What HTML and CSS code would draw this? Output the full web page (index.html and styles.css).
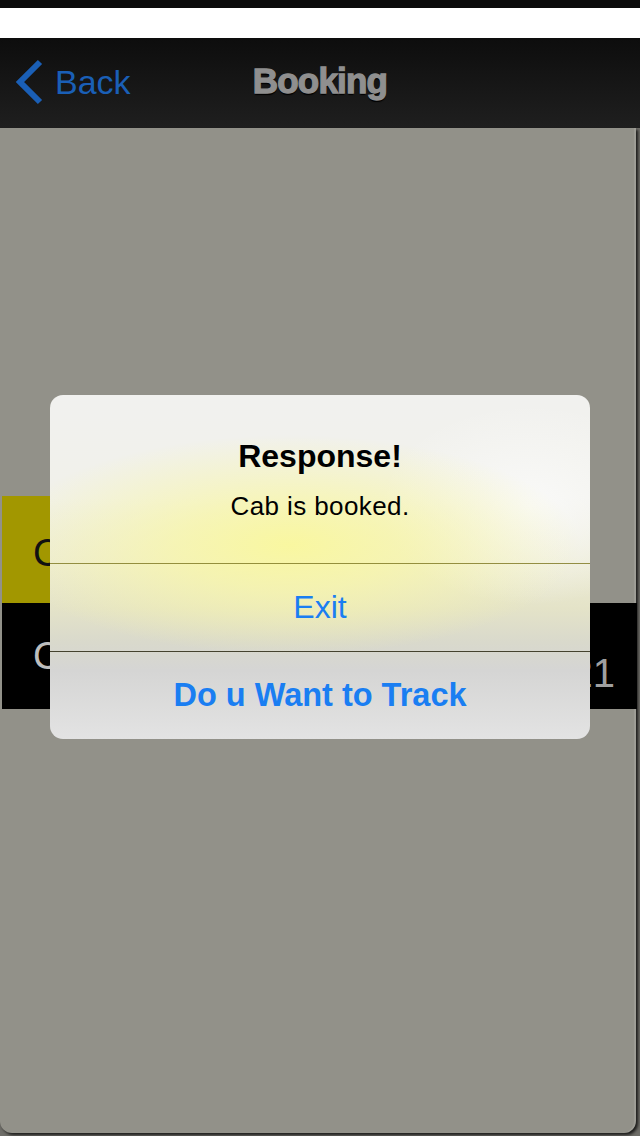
FILE: index.html
```html
<!DOCTYPE html>
<html>
<head>
<meta charset="utf-8">
<link rel="stylesheet" href="styles.css">
</head>
<body>
<div class="screen">
  <div class="statusbar"></div>
  <div class="gap"></div>
  <div class="nav">
    <div class="back">
      <svg class="chev" width="32" height="48" viewBox="0 0 32 48"><path d="M26 4 L6 24 L26 44" fill="none" stroke="#1a5fb6" stroke-width="6" stroke-linecap="butt" stroke-linejoin="miter"/></svg>
      <span class="back-text">Back</span>
    </div>
    <div class="title">Booking</div>
    <div class="spacer"></div>
  </div>
  <div class="stage">
    <div class="panel">
      <div class="row row-yellow"><span class="lbl">C</span></div>
      <div class="row row-black"><span class="lbl">C</span><span class="val">21</span></div>
    </div>
    <div class="alert">
      <div class="alert-body">
        <div class="alert-title">Response!</div>
        <div class="alert-msg">Cab is booked.</div>
      </div>
      <div class="alert-btn btn-exit">Exit</div>
      <div class="alert-btn btn-track">Do u Want to Track</div>
    </div>
  </div>
</div>
</body>
</html>
```
FILE: styles.css
```css
html, body {
  margin: 0;
  padding: 0;
}
body {
  width: 640px;
  height: 1136px;
  overflow: hidden;
  background: #ffffff;
  font-family: "Liberation Sans", Arial, sans-serif;
}
.screen {
  width: 640px;
  height: 1136px;
  display: flex;
  flex-direction: column;
}
.statusbar {
  height: 8px;
  background: #0b0b0b;
}
.gap {
  height: 30px;
  background: #ffffff;
}
.nav {
  height: 90px;
  background: linear-gradient(to bottom, #0d0d0d 0%, #161616 50%, #1f1f1f 100%);
  display: grid;
  grid-template-columns: 1fr auto 1fr;
  align-items: center;
}
.back {
  display: flex;
  align-items: center;
  padding-left: 14px;
  gap: 9px;
  margin-top: -2px;
}
.chev {
  display: block;
}
.back-text {
  color: #1a5fb6;
  font-size: 34px;
  line-height: 40px;
}
.title {
  color: #8f8f8f;
  font-size: 35px;
  font-weight: 700;
  line-height: 40px;
  letter-spacing: -0.8px;
  -webkit-text-stroke: 1.3px #8f8f8f;
  text-shadow: 0 2px 1px #000, 0 1px 0 #000;
  margin-top: -4px;
}
.stage {
  flex: 1;
  position: relative;
  background: #6e6d68;
}
.panel {
  width: 636px;
  height: 1005px;
  background: #929189;
  border-radius: 0 0 12px 12px;
  box-shadow: 2px 2px 3px rgba(0, 0, 0, 0.75), inset -2px 0 1px rgba(255, 255, 255, 0.12);
  padding-top: 368px;
  box-sizing: border-box;
  padding-left: 2px;
}
.row {
  height: 106px;
  display: flex;
  align-items: center;
  justify-content: space-between;
  box-sizing: border-box;
  padding: 0 22px 0 31px;
}
.row-yellow {
  width: 520px;
  height: 107px;
  background: #a29700;
  color: #111;
}
.row-black {
  width: 635px;
  background: #000;
  color: #bdbdbd;
}
.lbl {
  font-size: 38px;
}
.val {
  font-size: 40px;
  color: #a0a0a0;
  margin-top: 34px;
}
.row-yellow .lbl {
  margin-top: 8px;
}
.row-black .lbl {
  margin-top: 0;
}
.alert {
  position: absolute;
  left: 50px;
  top: 267px;
  width: 540px;
  height: 344px;
  border-radius: 13px;
  overflow: hidden;
  background:
    radial-gradient(ellipse 290px 110px at 240px 150px, rgba(249, 247, 160, 1) 0%, rgba(249, 247, 165, 0.7) 40%, rgba(248, 246, 175, 0) 100%),
    radial-gradient(ellipse 150px 100px at 480px 110px, rgba(250, 250, 250, 0.9) 0%, rgba(250, 250, 250, 0) 100%),
    linear-gradient(to bottom, #f1f1ef 0%, #f1f1ea 30%, #ecebd4 50%, #e4e3c8 62%, #d9d9cc 72%, #d5d5d4 80%, #e3e3e3 100%);
  display: flex;
  flex-direction: column;
}
.alert-body {
  height: 168px;
  box-sizing: border-box;
  padding-top: 42px;
  display: flex;
  flex-direction: column;
  align-items: center;
  gap: 16px;
}
.alert-title {
  font-size: 32px;
  font-weight: 700;
  line-height: 38px;
  color: #000;
}
.alert-msg {
  font-size: 26px;
  line-height: 30px;
  letter-spacing: 0.4px;
  color: #000;
}
.alert-btn {
  height: 88px;
  display: flex;
  align-items: center;
  justify-content: center;
  color: #1a7ef2;
  font-size: 32px;
  box-sizing: border-box;
}
.btn-exit {
  border-top: 1px solid rgba(130, 125, 40, 0.85);
}
.btn-track {
  border-top: 1px solid #45432f;
  font-weight: 700;
  font-size: 32.5px;
}
```
